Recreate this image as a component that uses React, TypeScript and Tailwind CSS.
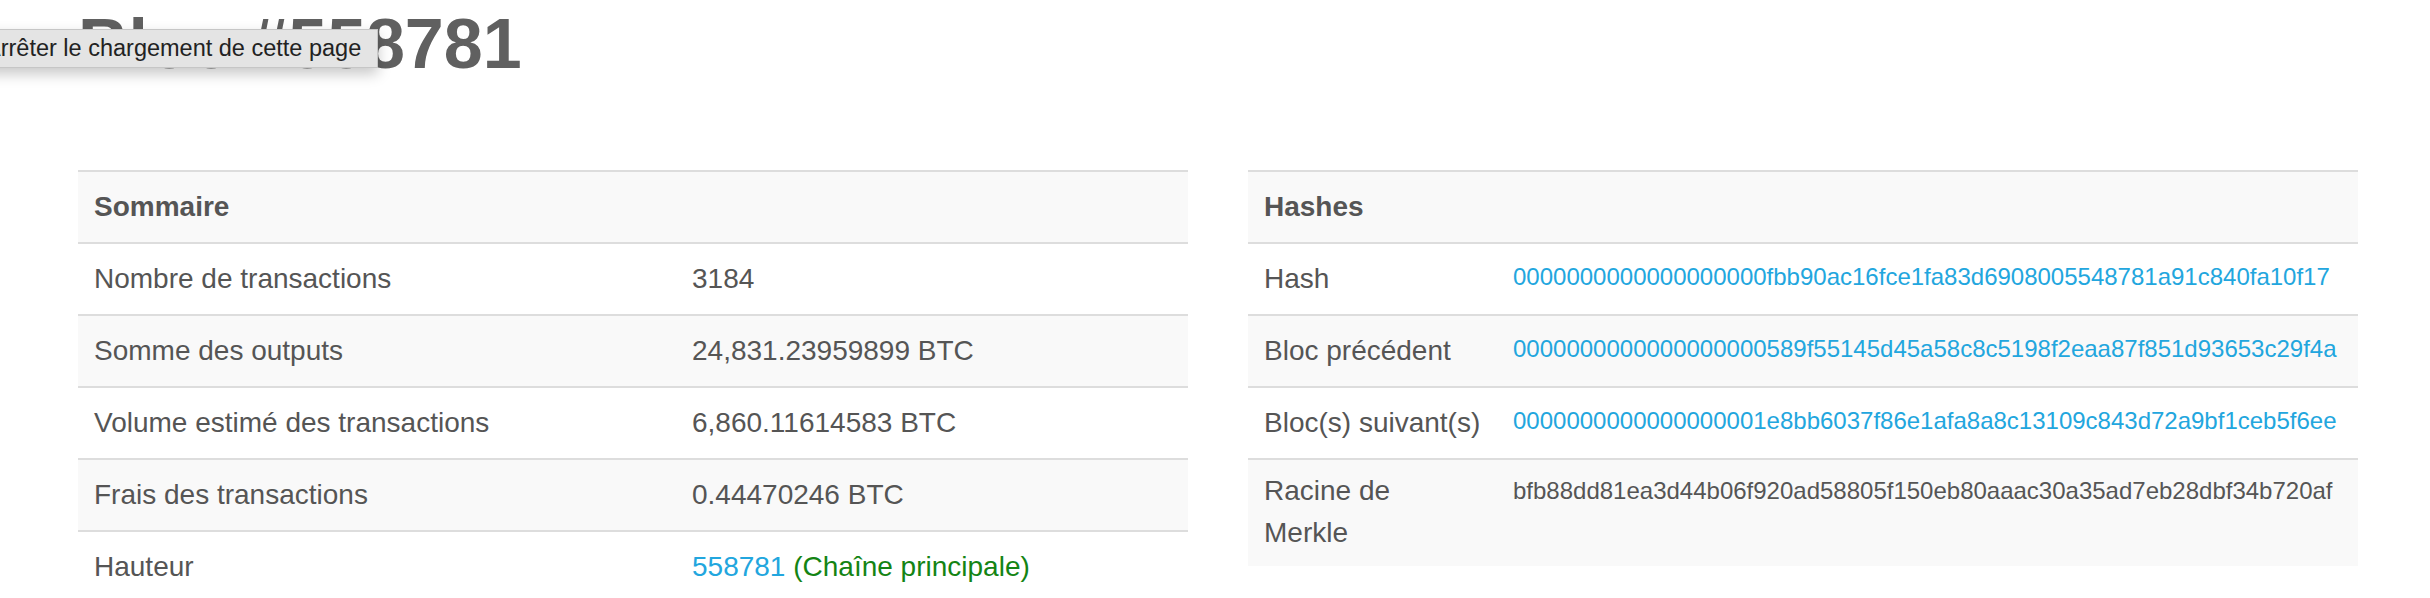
import React from "react";

const font = "font-['Liberation_Sans',Arial,Helvetica,sans-serif]";

type Row = { label: React.ReactNode; value: React.ReactNode; tall?: boolean };

function LeftTable() {
  const rows: Row[] = [
    { label: "Nombre de transactions", value: "3184" },
    { label: "Somme des outputs", value: "24,831.23959899 BTC" },
    { label: "Volume estimé des transactions", value: "6,860.11614583 BTC" },
    { label: "Frais des transactions", value: "0.44470246 BTC" },
    {
      label: "Hauteur",
      value: (
        <>
          <span className="text-[#22a6de]">558781</span>{" "}
          <span className="text-[#148414]">(Chaîne principale)</span>
        </>
      ),
    },
  ];
  return (
    <div className="w-[1110px] shrink-0">
      <div className="border-t-2 border-[#dddddd] bg-[#f9f9f9] px-4 py-[15px] text-[28px] leading-[40px] font-bold text-[#555555]">
        Sommaire
      </div>
      {rows.map((r, i) => (
        <div
          key={i}
          className={`grid grid-cols-[598px_512px] border-t-2 border-[#dddddd] ${
            i % 2 === 1 ? "bg-[#f9f9f9]" : "bg-white"
          }`}
        >
          <div className="px-4 py-[15px] text-[28px] leading-[40px] text-[#555555]">{r.label}</div>
          <div className="px-4 py-[15px] text-[28px] leading-[40px] text-[#555555] whitespace-nowrap">
            {r.value}
          </div>
        </div>
      ))}
    </div>
  );
}

function RightTable() {
  const rows: { label: React.ReactNode; value: string; link: boolean }[] = [
    { label: "Hash", value: "0000000000000000000fbb90ac16fce1fa83d6908005548781a91c840fa10f17", link: true },
    { label: "Bloc précédent", value: "0000000000000000000589f55145d45a58c8c5198f2eaa87f851d93653c29f4a", link: true },
    { label: "Bloc(s) suivant(s)", value: "0000000000000000001e8bb6037f86e1afa8a8c13109c843d72a9bf1ceb5f6ee", link: true },
  ];
  return (
    <div className="w-[1110px] shrink-0">
      <div className="border-t-2 border-[#dddddd] bg-[#f9f9f9] px-4 py-[15px] text-[28px] leading-[40px] font-bold text-[#555555]">
        Hashes
      </div>
      {rows.map((r, i) => (
        <div
          key={i}
          className={`grid grid-cols-[249px_861px] border-t-2 border-[#dddddd] ${
            i % 2 === 1 ? "bg-[#f9f9f9]" : "bg-white"
          }`}
        >
          <div className="px-4 py-[15px] text-[28px] leading-[40px] text-[#555555] whitespace-nowrap">{r.label}</div>
          <div className="px-4 pt-[13px] pb-[15px] text-[24px] leading-[40px] text-[#22a6de] whitespace-nowrap">
            {r.value}
          </div>
        </div>
      ))}
      <div className="grid grid-cols-[249px_861px] border-t-2 border-[#dddddd] bg-[#f9f9f9]">
        <div className="px-4 pt-[10px] pb-[12px] text-[28px] leading-[42px] text-[#555555]">
          Racine de
          <br />
          Merkle
        </div>
        <div className="px-4 pt-[10px] pb-[12px] text-[24px] leading-[42px] text-[#555555] whitespace-nowrap">
          bfb88dd81ea3d44b06f920ad58805f150eb80aaac30a35ad7eb28dbf34b720af
        </div>
      </div>
    </div>
  );
}

export default function App() {
  return (
    <div className={`relative w-[2430px] h-[598px] overflow-hidden bg-white ${font}`}>
      <div className="pl-[78px]">
        <h1 className="pt-[9px] text-[70px] leading-[70px] font-bold text-[#606060] whitespace-nowrap">
          Bloc #558781
        </h1>
        <div className="mt-[91px] flex gap-[60px]">
          <LeftTable />
          <RightTable />
        </div>
      </div>

      <div className="absolute left-[-20px] top-[29px] h-[39px] w-[398px] border border-[#c6c6c6] bg-[#e4e4e4] shadow-[0_6px_14px_rgba(0,0,0,0.22)] pl-[4px] text-[23.5px] leading-[36px] text-[#222222] whitespace-nowrap">
        Arrêter le chargement de cette page
      </div>
    </div>
  );
}
